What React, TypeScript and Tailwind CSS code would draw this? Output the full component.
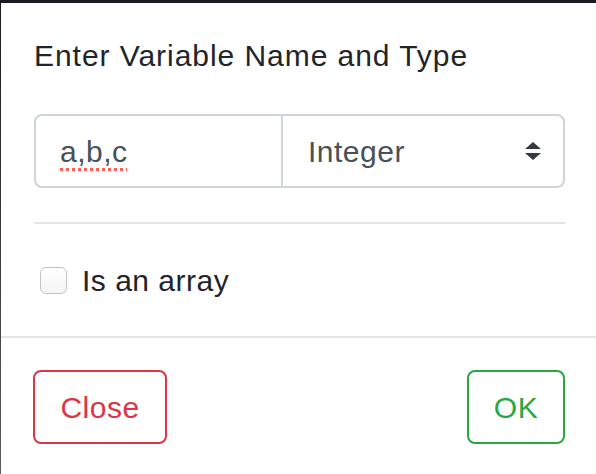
export default function App() {
  return (
    <div className="flex h-[474px] w-[596px] overflow-hidden bg-white font-['Liberation_Sans',Arial,sans-serif] tracking-[0.5px]">
      <div className="w-px flex-none bg-gradient-to-b from-[#1c1c20] to-[#5c5c5c]" />
      <div className="flex flex-1 flex-col">
        <div className="h-[3px] flex-none bg-[#1c1c20]" />

        <div className="flex flex-col pl-[33px] pr-[31px]">
          <h5 className="mt-[35px] text-[30px] leading-[35px] font-normal text-[#212529] tracking-[0.95px]">
            Enter Variable Name and Type
          </h5>

          <div className="mt-[41px] flex h-[74px] rounded-[8px] border-2 border-[#ced4da]">
            <div className="flex w-[247px] items-center border-r-2 border-[#ced4da] pl-[24px]">
              <span className="text-[30px] text-[#495057] underline decoration-[#ff5f57] decoration-dotted decoration-[3px] underline-offset-[6px]">
                a,b,c
              </span>
            </div>
            <div className="flex flex-1 items-center justify-between pl-[25px] pr-[22px]">
              <span className="text-[30px] text-[#495057]">Integer</span>
              <svg width="16" height="18" viewBox="0 0 16 18" className="text-[#343a40]">
                <path d="M8 0 L16 7 L0 7 Z M0 11 L16 11 L8 18 Z" fill="currentColor" />
              </svg>
            </div>
          </div>

          <div className="mt-[34px] h-[2px] bg-[#e3e6e9]" />

          <div className="mt-[34px] flex h-[44px] items-center">
            <span className="ml-[6px] h-[27px] w-[27px] rounded-[6px] border border-[#c4c4c4] bg-gradient-to-b from-white to-[#f4f4f4]" />
            <span className="ml-[15px] text-[30px] text-[#212529]">Is an array</span>
          </div>
        </div>

        <div className="mt-[34px] flex flex-1 items-start justify-between border-t-2 border-[#e3e6e9] pl-[32px] pr-[31px] pt-[32px]">
          <button className="flex h-[74px] w-[134px] items-center justify-center rounded-[8px] border-2 border-[#dc3545] text-[30px] text-[#dc3545]">
            Close
          </button>
          <button className="flex h-[74px] w-[98px] items-center justify-center rounded-[8px] border-2 border-[#28a745] text-[30px] text-[#28a745]">
            OK
          </button>
        </div>
      </div>
    </div>
  );
}
